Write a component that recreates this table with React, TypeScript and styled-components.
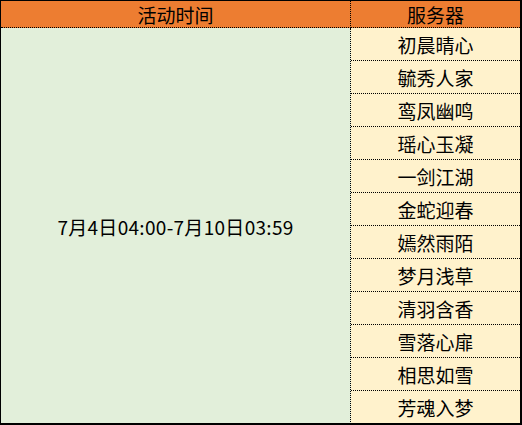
import React from "react";
import styled, { createGlobalStyle } from "styled-components";

const Global = createGlobalStyle`
  html, body { margin: 0; padding: 0; background: #ffffff; }
  body { font-family: "Noto Sans CJK SC", "Microsoft YaHei", sans-serif; }
`;

const Frame = styled.div`
  box-sizing: border-box;
  width: 522px;
  height: 425px;
  border-style: solid;
  border-color: #000;
  border-width: 1px 2px 2px 1px;
  display: grid;
  grid-template-columns: 350px 169px;
  grid-template-rows: 27px repeat(12, 33px);
  overflow: hidden;
`;

const HeadCell = styled.div<{ $divider?: boolean }>`
  box-sizing: border-box;
  background: #ed7d31;
  color: #000;
  font-size: 19px;
  display: flex;
  align-items: center;
  justify-content: center;
  border-bottom: 1px dotted #000;
  border-right: ${(p) => (p.$divider ? "1px dotted #000" : "none")};
  line-height: 1;
`;

const TimeCell = styled.div`
  box-sizing: border-box;
  grid-column: 1;
  grid-row: 2 / span 12;
  background: #e2efda;
  border-right: 1px dotted #000;
  display: flex;
  align-items: center;
  justify-content: center;
  font-size: 19px;
  letter-spacing: 0.3px;
  color: #000;
  line-height: 1;
`;

const ServerCell = styled.div<{ $last?: boolean }>`
  box-sizing: border-box;
  grid-column: 2;
  background: #fff2cc;
  border-bottom: ${(p) => (p.$last ? "none" : "1px dotted #000")};
  display: flex;
  align-items: center;
  justify-content: center;
  font-size: 19px;
  color: #000;
  line-height: 1;
`;

const servers = [
  "初晨晴心",
  "毓秀人家",
  "鸾凤幽鸣",
  "瑶心玉凝",
  "一剑江湖",
  "金蛇迎春",
  "嫣然雨陌",
  "梦月浅草",
  "清羽含香",
  "雪落心扉",
  "相思如雪",
  "芳魂入梦",
];

export default function App() {
  return (
    <>
      <Global />
      <Frame>
        <HeadCell $divider>活动时间</HeadCell>
        <HeadCell>服务器</HeadCell>
        <TimeCell>7月4日04:00-7月10日03:59</TimeCell>
        {servers.map((s, i) => (
          <ServerCell key={s} $last={i === servers.length - 1}>
            {s}
          </ServerCell>
        ))}
      </Frame>
    </>
  );
}
